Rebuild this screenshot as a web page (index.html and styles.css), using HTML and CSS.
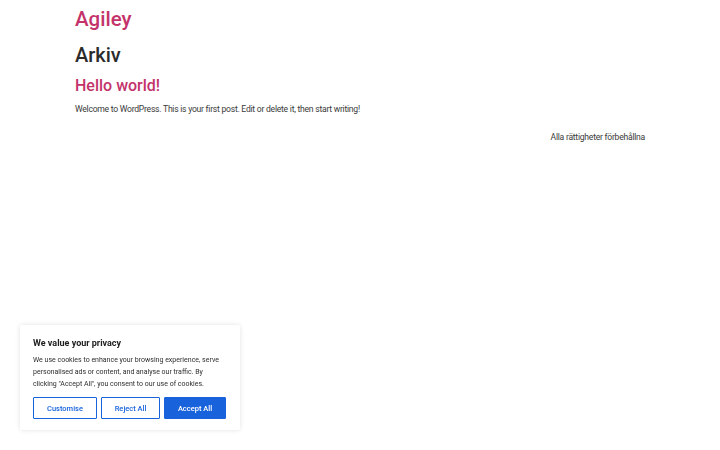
FILE: index.html
```html
<!DOCTYPE html>
<html lang="sv">
<head>
<meta charset="utf-8">
<title>Arkiv – Agiley</title>
<link rel="stylesheet" href="styles.css">
</head>
<body>
<div class="page">
  <header class="site-header">
    <a class="site-title" href="#">Agiley</a>
  </header>
  <main class="archive">
    <h1 class="archive-title">Arkiv</h1>
    <article class="post">
      <h2 class="post-title"><a href="#">Hello world!</a></h2>
      <p class="post-excerpt">Welcome to WordPress. This is your first post. Edit or delete it, then start writing!</p>
    </article>
  </main>
  <footer class="site-footer">
    <p>Alla rättigheter förbehållna</p>
  </footer>
</div>

<div class="cookie-banner">
  <p class="cookie-title">We value your privacy</p>
  <p class="cookie-text">We use cookies to enhance your browsing experience, serve personalised ads or content, and analyse our traffic. By clicking "Accept All", you consent to our use of cookies.</p>
  <div class="cookie-actions">
    <button class="btn btn-outline btn-customise">Customise</button>
    <button class="btn btn-outline btn-reject">Reject All</button>
    <button class="btn btn-solid btn-accept">Accept All</button>
  </div>
</div>
</body>
</html>
```

FILE: styles.css
```css
* { box-sizing: border-box; }

html, body {
  margin: 0;
  padding: 0;
  background: #fff;
  font-family: Roboto, "Liberation Sans", sans-serif;
  color: #333;
}

.page {
  width: 570px;
  margin: 0 auto;
  padding-top: 5px;
}

.site-title {
  display: inline-block;
  font-size: 20.5px;
  line-height: 28px;
  font-weight: 500;
  color: #c3336a;
  text-decoration: none;
}

.archive-title {
  margin: 8px 0 0;
  font-size: 20px;
  line-height: 28px;
  font-weight: 500;
  color: #2b2b2b;
}

.post-title {
  margin: 6px 0 0;
  font-size: 16px;
  line-height: 22px;
  font-weight: 500;
}

.post-title a {
  color: #c3336a;
  text-decoration: none;
}

.post-excerpt {
  margin: 6px 0 0;
  font-size: 8.6px;
  line-height: 12px;
  letter-spacing: -0.25px;
  color: #3a3a3a;
}

.site-footer {
  display: flex;
  justify-content: flex-end;
  margin-top: 16px;
}

.site-footer p {
  margin: 0;
  font-size: 8.6px;
  line-height: 12px;
  letter-spacing: -0.25px;
  color: #3a3a3a;
}

.cookie-banner {
  position: fixed;
  left: 20px;
  bottom: 20px;
  width: 220px;
  padding: 12px 13px 11px;
  background: #fff;
  border-radius: 2px;
  box-shadow: 0 0 5px rgba(0, 0, 0, 0.12);
}

.cookie-title {
  margin: 0;
  font-size: 9px;
  line-height: 12px;
  font-weight: 700;
  color: #212121;
}

.cookie-text {
  margin: 5px 0 0;
  font-size: 7px;
  line-height: 12px;
  color: #2e2e2e;
}

.cookie-actions {
  display: flex;
  gap: 4px;
  margin-top: 7px;
}

.btn {
  height: 22px;
  padding: 0;
  font-family: inherit;
  font-size: 7.5px;
  font-weight: 500;
  border-radius: 1px;
  border: 1px solid #1863dc;
  cursor: pointer;
}

.btn-outline {
  background: #fff;
  color: #1863dc;
}

.btn-customise { width: 64px; }
.btn-reject { width: 59px; }
.btn-accept { width: 62px; }

.btn-solid {
  background: #1863dc;
  color: #fff;
}
```
